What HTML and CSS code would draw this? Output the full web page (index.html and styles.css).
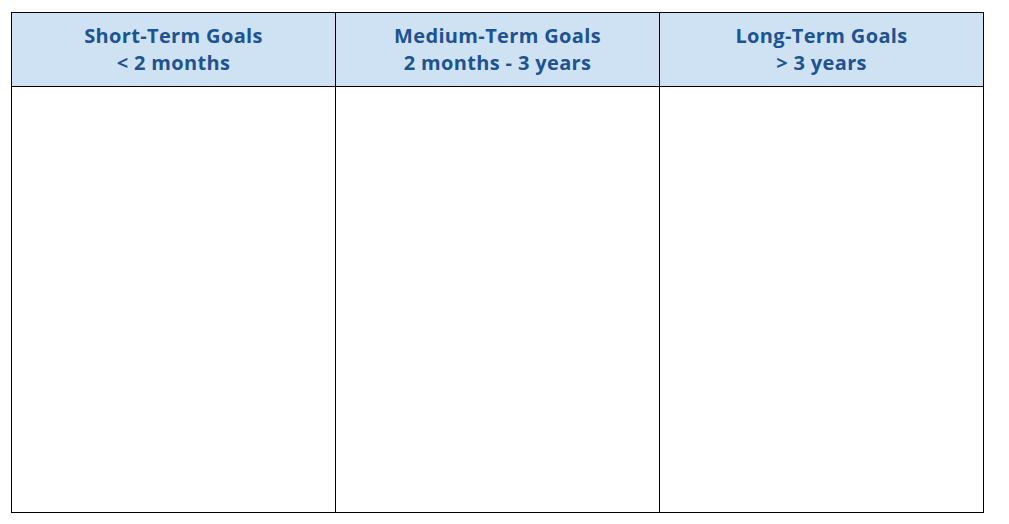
FILE: index.html
```html
<!DOCTYPE html>
<html>
<head>
<meta charset="utf-8">
<link rel="stylesheet" href="styles.css">
</head>
<body>
<div class="page">
  <div class="goals">
    <div class="head"><span>Short-Term Goals</span><span>&lt; 2 months</span></div>
    <div class="head"><span>Medium-Term Goals</span><span>2 months - 3 years</span></div>
    <div class="head"><span>Long-Term Goals</span><span>&gt; 3 years</span></div>
    <div class="cell"></div>
    <div class="cell"></div>
    <div class="cell"></div>
  </div>
</div>
</body>
</html>
```
FILE: styles.css
```css
html, body {
  margin: 0;
  background: #ffffff;
}
.page {
  padding: 12px 0 0 11px;
}
.goals {
  display: grid;
  grid-template-columns: repeat(3, 324px);
  grid-template-rows: 74px 426px;
  width: max-content;
  border-left: 1px solid #000;
  border-top: 1px solid #000;
}
.head, .cell {
  border-right: 1px solid #000;
  border-bottom: 1px solid #000;
}
.head {
  background: #cfe2f3;
  color: #1d5392;
  font-family: "Open Sans", "DejaVu Sans", sans-serif;
  font-weight: 700;
  font-size: 20px;
  letter-spacing: 0.35px;
  line-height: 27px;
  display: flex;
  flex-direction: column;
  align-items: center;
  justify-content: center;
  padding-bottom: 2px;
}
.cell {
  background: #ffffff;
}
```
